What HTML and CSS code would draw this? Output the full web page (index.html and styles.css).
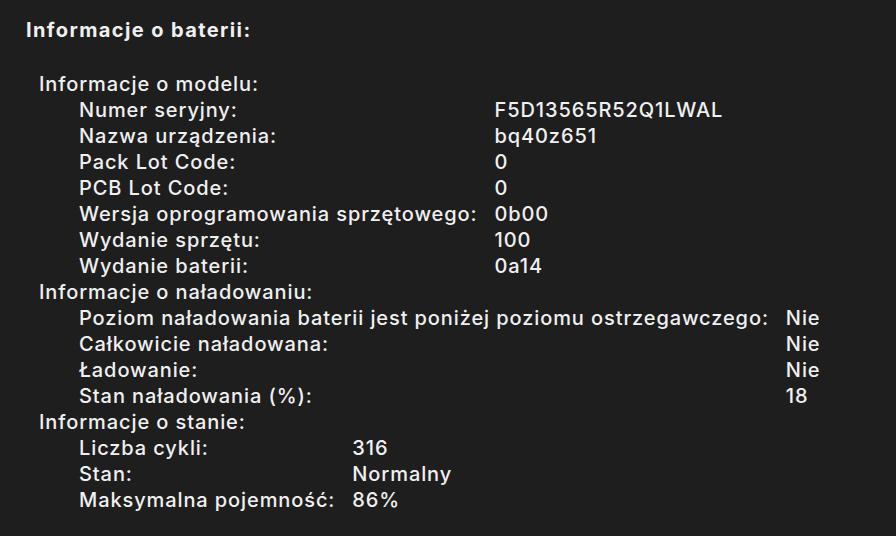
FILE: index.html
```html
<!DOCTYPE html>
<html lang="pl">
<head>
<meta charset="utf-8">
<link rel="stylesheet" href="styles.css">
</head>
<body>
<div class="page">
  <h1 class="title">Informacje o baterii:</h1>
  <div class="groups">
    <section class="group">
      <div class="group-title">Informacje o modelu:</div>
      <div class="rows">
        <div class="label">Numer seryjny:</div><div class="value">F5D13565R52Q1LWAL</div>
        <div class="label">Nazwa urządzenia:</div><div class="value">bq40z651</div>
        <div class="label">Pack Lot Code:</div><div class="value">0</div>
        <div class="label">PCB Lot Code:</div><div class="value">0</div>
        <div class="label">Wersja oprogramowania sprzętowego:</div><div class="value">0b00</div>
        <div class="label">Wydanie sprzętu:</div><div class="value">100</div>
        <div class="label">Wydanie baterii:</div><div class="value">0a14</div>
      </div>
    </section>
    <section class="group">
      <div class="group-title">Informacje o naładowaniu:</div>
      <div class="rows">
        <div class="label">Poziom naładowania baterii jest poniżej poziomu ostrzegawczego:</div><div class="value">Nie</div>
        <div class="label">Całkowicie naładowana:</div><div class="value">Nie</div>
        <div class="label">Ładowanie:</div><div class="value">Nie</div>
        <div class="label">Stan naładowania (%):</div><div class="value">18</div>
      </div>
    </section>
    <section class="group">
      <div class="group-title">Informacje o stanie:</div>
      <div class="rows">
        <div class="label">Liczba cykli:</div><div class="value">316</div>
        <div class="label">Stan:</div><div class="value">Normalny</div>
        <div class="label">Maksymalna pojemność:</div><div class="value">86%</div>
      </div>
    </section>
  </div>
</div>
</body>
</html>
```
FILE: styles.css
```css
html, body {
  margin: 0;
  padding: 0;
  background: #1e1e1e;
}
body {
  width: 896px;
  height: 536px;
  overflow: hidden;
  font-family: Inter, "Noto Sans", sans-serif;
  color: #f0f0f0;
  font-size: 20px;
  font-weight: 500;
  letter-spacing: 0.9px;
  line-height: 26px;
}
.page {
  padding: 17px 0 0 26px;
}
.title {
  margin: 0 0 28px 0;
  font-size: 20px;
  font-weight: 700;
  letter-spacing: 1.4px;
  line-height: 26px;
}
.groups {
  margin-left: 13px;
}
.group-title {
  line-height: 26px;
}
.rows {
  display: grid;
  grid-template-columns: max-content max-content;
  column-gap: 17px;
  margin-left: 40px;
}
.label, .value {
  line-height: 26px;
  white-space: nowrap;
}
```
